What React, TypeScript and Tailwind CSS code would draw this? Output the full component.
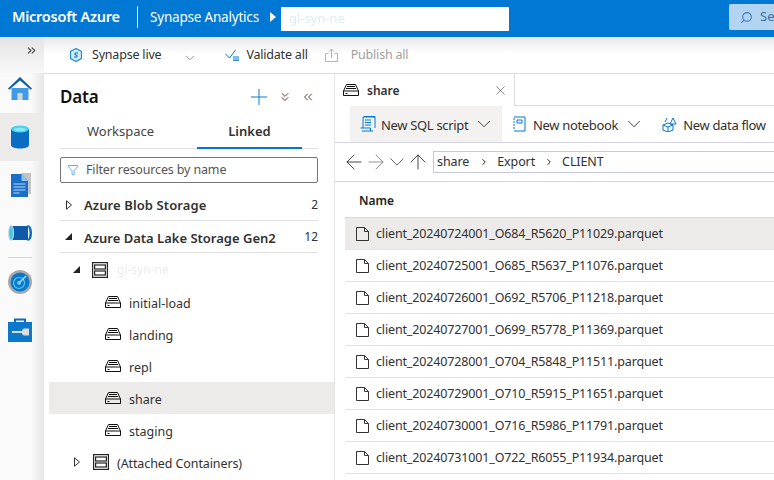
import React from 'react';
import { ChevronDown, ChevronRight, ChevronsDown, ChevronsLeft, ChevronsRight, ArrowLeft, ArrowRight, ArrowUp, Plus, X, Search, Filter } from 'lucide-react';

const FONT = 'font-["Noto_Sans","Open_Sans",sans-serif]';

const Drive = ({ className = '' }: { className?: string }) => (
  <svg viewBox="0 0 16 12" width="16" height="12" fill="none" stroke="#111" strokeWidth="1" className={`shrink-0 ${className}`}>
    <path d="M3.500 .5h9l3 6.500v4.500H.5V7z M.5 7h15 M4 2.500h8 M3 4.500h10 M2.500 9.500h2" />
  </svg>
);

const Account = () => (
  <svg viewBox="0 0 16 16" width="16" height="16" fill="none" stroke="#222" strokeWidth="1.200" className="shrink-0">
    <rect x=".6" y=".6" width="14.800" height="14.800" />
    <rect x="2.600" y="3" width="10.800" height="4" />
    <rect x="2.600" y="9" width="10.800" height="4" />
  </svg>
);

const FileIcon = () => (
  <svg viewBox="0 0 13 14" width="13" height="14" fill="none" stroke="#333" strokeWidth="1" className="shrink-0">
    <path d="M.5 .5h8l4 4v9H.5z M8.500 .5v4h4" />
  </svg>
);

const Caret = ({ open }: { open?: boolean }) =>
  open ? (
    <svg viewBox="0 0 7 7" width="7" height="7" className="shrink-0"><path d="M7 0v7H0z" fill="#222" /></svg>
  ) : (
    <svg viewBox="0 0 6 10" width="6" height="10" fill="none" stroke="#333" className="shrink-0"><path d="M.5 .8l5 4.200-5 4.200z" /></svg>
  );

const railIcons = [
  <svg key="home" viewBox="0 0 24 24" width="24" height="24">
    <path d="M3.500 11h17v12h-17z" fill="#3f9be8" />
    <path d="M9.500 16h5v7h-5z" fill="#d8d8d8" />
    <path d="M12 0L0 11.500l1.200 1.200L12 3.500l10.800 9.200 1.200-1.200z" fill="#0f5fa8" />
  </svg>,
  <svg key="data" viewBox="0 0 18 24" width="18" height="24">
    <path d="M0 4v16c0 2 4 3.500 9 3.500s9-1.500 9-3.500V4z" fill="#0b6cc4" />
    <ellipse cx="9" cy="4" rx="9" ry="3.500" fill="#45d3ee" />
    <ellipse cx="9" cy="4.500" rx="6" ry="1.800" fill="#8be6f5" />
  </svg>,
  <svg key="doc" viewBox="0 0 21 24" width="21" height="24">
    <path d="M11 0h10v21H11z" fill="#c4c4c4" />
    <path d="M1 1h10.500L18 8v16H1z" fill="#1a6fc9" />
    <path d="M11.500 1L18 8h-6.500z" fill="#8fc4ef" />
    <path d="M3.500 11h12M3.500 14h12M3.500 17h12M3.500 20h6" stroke="#b8d8f2" strokeWidth="1" />
  </svg>,
  <svg key="pipe" viewBox="0 0 24 16" width="24" height="16">
    <path d="M4 1h16v14H4z" fill="#0f5aa8" />
    <ellipse cx="3" cy="8" rx="2.500" ry="7.500" fill="#45c9ee" stroke="#dcdcdc" />
    <path d="M19 0c3.500 0 5 3 5 8s-1.500 8-5 8c1.500-2 2.500-4.500 2.500-8S20.500 2 19 0z" fill="#0f6cc0" />
  </svg>,
  <svg key="monitor" viewBox="0 0 24 24" width="24" height="24">
    <circle cx="12" cy="12" r="12" fill="#a8a8a8" />
    <circle cx="12" cy="12" r="9.500" fill="#0b78cc" />
    <circle cx="11" cy="13" r="5.500" fill="none" stroke="#5cc8f0" strokeWidth="1.200" />
    <circle cx="11" cy="13" r="2" fill="#5cc8f0" />
    <path d="M11 13l7-7" stroke="#a4e4f7" strokeWidth="1.500" />
  </svg>,
  <svg key="manage" viewBox="0 0 24 24" width="24" height="24">
    <path d="M7 6V1.500h10V6" fill="none" stroke="#0b6cc4" strokeWidth="2" />
    <path d="M0 4h24v20H0z" fill="#0b78cc" />
    <path d="M4 14h12M16 11.500a3 3 0 0 0 0 5h4V15h-3v-2h3v-1.500z" stroke="#dcdcdc" strokeWidth="2" fill="#dcdcdc" />
  </svg>,
];

const containers = ['initial-load', 'landing', 'repl', 'share', 'staging'];

const files = [
  'client_20240724001_O684_R5620_P11029.parquet',
  'client_20240725001_O685_R5637_P11076.parquet',
  'client_20240726001_O692_R5706_P11218.parquet',
  'client_20240727001_O699_R5778_P11369.parquet',
  'client_20240728001_O704_R5848_P11511.parquet',
  'client_20240729001_O710_R5915_P11651.parquet',
  'client_20240730001_O716_R5986_P11791.parquet',
  'client_20240731001_O722_R6055_P11934.parquet',
];

const App = () => {
  return (
    <div className={`${FONT} w-[774px] h-[480px] overflow-hidden flex flex-col bg-white text-[#323130]`}>
      {/* top bar */}
      <div className="h-[37px] shrink-0 bg-[#0078d4] flex items-center text-white">
        <span className="ml-[12px] mb-[3px] w-[109px] text-[14.500px] font-semibold tracking-[-0.25px] whitespace-nowrap">Microsoft Azure</span>
        <div className="ml-[16px] mb-[3px] w-px h-[22px] bg-white" />
        <span className="ml-[12px] mb-[3px] w-[108px] text-[13.500px] tracking-[-0.2px] whitespace-nowrap">Synapse Analytics</span>
        <svg viewBox="0 0 6 10" width="6" height="10" className="ml-[12px] mb-[3px]"><path d="M0 0l6 5-6 5z" fill="#fff" /></svg>
        <div className="ml-[5px] w-[228px] h-[24px] bg-white flex items-center pl-[8px] text-[13px] text-[#dcecf8] blur-[0.7px]">gl-syn-ne</div>
        <div className="ml-auto w-[45px] h-[26px] mb-[3px] bg-[#b3d4f0] rounded-l-[2px] flex items-center pl-[11px] gap-[7px] text-[13px] text-[#3a6ea5] overflow-hidden">
          <Search size={13} className="shrink-0 -scale-x-100" color="#3b78c4" />
          <span>Se</span>
        </div>
      </div>

      <div className="flex-1 flex min-h-0">
        {/* icon rail */}
        <div className="w-[44px] shrink-0 bg-gradient-to-r from-[#fafafa] from-[70%] to-[#e6e6e6] flex flex-col">
          <div className="h-[36px] flex justify-end pr-[6px] pt-[7px] bg-gradient-to-b from-[#e4e4e4] to-[#f8f8f8]">
            <ChevronsRight size={13} color="#444" />
          </div>
          <div className="h-[40px] pb-[8px] pr-[4px] flex items-center justify-center">{railIcons[0]}</div>
          <div className="h-[48px] pr-[4px] bg-[#edebe9] flex items-center justify-center">{railIcons[1]}</div>
          <div className="h-[48px] pr-[4px] flex items-center justify-center">{railIcons[2]}</div>
          <div className="h-[48px] pr-[4px] flex items-center justify-center">{railIcons[3]}</div>
          <div className="ml-[8px] mr-[12px] h-px bg-[#d4d4d4]" />
          <div className="h-[48px] pr-[4px] flex items-center justify-center">{railIcons[4]}</div>
          <div className="h-[48px] pr-[4px] flex items-center justify-center">{railIcons[5]}</div>
        </div>

        <div className="flex-1 min-w-0 flex flex-col">
          {/* command bar */}
          <div className="h-[37px] shrink-0 border-b border-[#dedede] bg-gradient-to-b from-[#e6e6e6] via-white via-[45%] to-white flex items-center text-[12.500px] tracking-[-0.2px]">
            <svg viewBox="0 0 12 14" width="12" height="14" className="ml-[26px]">
              <path d="M6 .5l5.500 3v7L6 13.500.5 10.500v-7z" fill="#cfeaf7" stroke="#1e8fd0" strokeWidth="1.200" />
              <path d="M8 5H5v2h2v2H4" fill="none" stroke="#1570b8" />
            </svg>
            <span className="ml-[10px] whitespace-nowrap">Synapse live</span>
            <ChevronDown size={14} strokeWidth={1.200} color="#666" className="ml-[22px] mt-[6px]" />
            <svg viewBox="0 0 14 12" width="14" height="12" fill="none" className="ml-[28px]">
              <path d="M.5 5l4 4 6-8" stroke="#0078d4" />
              <path d="M8 8h6M8 10h6M8 11.700h6" stroke="#0078d4" />
            </svg>
            <span className="ml-[7px] whitespace-nowrap">Validate all</span>
            <svg viewBox="0 0 14 14" width="14" height="14" fill="none" stroke="#b5b5b5" className="ml-[17px]">
              <path d="M3.500 5.500H.5v8h12v-8h-3M6.500 10V1M4 3.500L6.500 1 9 3.500" />
            </svg>
            <span className="ml-[12px] text-[#a19f9d] whitespace-nowrap">Publish all</span>
          </div>

          <div className="flex-1 min-h-0 flex">
            {/* data panel */}
            <div className="w-[291px] shrink-0 border-r border-[#e5e5e5] flex flex-col">
              <div className="h-[46px] shrink-0 flex items-center pl-[16px]">
                <span className="text-[17px] font-semibold text-[#111] tracking-[-0.2px]">Data</span>
                <Plus size={26} strokeWidth={0.900} color="#0078d4" className="ml-[148px]" />
                <ChevronsDown size={14} strokeWidth={1.600} color="#5c2c16" className="ml-[6px]" />
                <ChevronsLeft size={14} strokeWidth={1.600} color="#5c2c16" className="ml-[9px]" />
              </div>
              <div className="mx-[16px] w-[258px] h-[29px] shrink-0 flex border-b border-[#e1e1e1] text-[13px]">
                <div className="w-[137px] pb-[4px] flex items-center justify-center text-[#444] -translate-x-[8px]">Workspace</div>
                <div className="w-[105px] pb-[4px] flex items-center justify-center font-semibold border-b-2 border-[#0078d4] h-[29px] text-[#333]">Linked</div>
              </div>
              <div className="mx-[16px] mt-[8px] w-[258px] h-[26px] shrink-0 border border-[#777] rounded-[2px] flex items-center pl-[6px] gap-[7px] text-[12.500px] text-[#555] tracking-[-0.15px]">
                <Filter size={12} color="#0078d4" strokeWidth={1.200} />
                <span>Filter resources by name</span>
              </div>
              <div className="mt-[6px] ml-[5px] flex flex-col">
                <div className="ml-[11px] mr-[16px] h-[32px] flex items-center border-b border-[#e1e1e1] text-[13px] font-semibold">
                  <div className="w-[24px] pl-[6px]"><Caret /></div>
                  <span className="pt-[2px] tracking-[0.1px]">Azure Blob Storage</span>
                  <span className="ml-auto text-[12px] font-normal">2</span>
                </div>
                <div className="ml-[11px] mr-[16px] h-[32px] flex items-center border-b border-[#e1e1e1] text-[13px] font-semibold">
                  <div className="w-[24px] pl-[5px]"><Caret open /></div>
                  <span className="pt-[4px] whitespace-nowrap">Azure Data Lake Storage Gen2</span>
                  <span className="ml-auto text-[12px] font-normal">12</span>
                </div>
                <div className="h-[33px] flex items-center pl-[24px]">
                  <Caret open />
                  <div className="w-[12px]" />
                  <Account />
                  <span className="ml-[9px] text-[12px] text-[#ececec] blur-[0.5px] whitespace-nowrap">gl-syn-ne</span>
                </div>
                {containers.map((name) => (
                  <div key={name} className={`h-[32px] pl-[56px] flex items-center gap-[8px] text-[12.500px] ${name === 'share' ? 'bg-[#edebe9]' : ''}`}>
                    <Drive />
                    <span className="pt-[4px]">{name}</span>
                  </div>
                ))}
                <div className="h-[32px] flex items-center pl-[25px] text-[12.500px] tracking-[-0.1px]">
                  <Caret />
                  <div className="w-[13px]" />
                  <Account />
                  <span className="ml-[8px] pt-[4px] whitespace-nowrap">(Attached Containers)</span>
                </div>
              </div>
            </div>

            {/* share tab */}
            <div className="flex-1 min-w-0 flex flex-col">
              <div className="h-[32px] shrink-0 flex border-b border-[#dedede]">
                <div className="w-[180px] h-[32px] bg-white border-r border-[#dedede] flex items-center pl-[8px] text-[12px] font-semibold">
                  <Drive />
                  <span className="ml-[8px] pt-[2px]">share</span>
                  <X size={15} strokeWidth={1} color="#444" className="ml-auto mr-[6px]" />
                </div>
              </div>
              <div className="h-[37px] shrink-0 flex items-center border-b border-[#d6d6e4] text-[13px] tracking-[-0.33px]">
                <div className="ml-[15px] w-[152px] h-[36px] bg-[#f3f2f1] flex items-center pl-[10px]">
                  <svg viewBox="0 0 16 16" width="16" height="16" fill="none" stroke="#0078d4" className="shrink-0">
                    <path d="M3 12V1h11v1M4 .5h11V12M2 15h11M.5 12h10v3M5 4h6M5 6.500h6M5 9h6" />
                  </svg>
                  <span className="ml-[5px] pt-[3px] whitespace-nowrap">New SQL script</span>
                  <ChevronDown size={22} className="ml-[5px] shrink-0" strokeWidth={1} />
                </div>
                <svg viewBox="0 0 16 16" width="16" height="16" fill="none" stroke="#0078d4" className="ml-[10px] shrink-0">
                  <path d="M2 1h11v14H2M1 3h2M1 6h2M1 9h2M1 12h2M5 4h5v3H5z" />
                </svg>
                <span className="ml-[5px] pt-[3px] whitespace-nowrap">New notebook</span>
                <ChevronDown size={22} className="ml-[5px] shrink-0" strokeWidth={1} />
                <svg viewBox="0 0 16 16" width="16" height="16" fill="none" stroke="#0078d4" className="ml-[17px] shrink-0">
                  <path d="M1 9l5-2 5 2v5l-5 2-5-2zM1 9l5 2 5-2M6 11v5M11 2l3 6h-6zM3 6l2-4" />
                </svg>
                <span className="ml-[5px] pt-[3px] whitespace-nowrap">New data flow</span>
              </div>
              <div className="h-[39px] shrink-0 flex items-center border-b border-[#d6d6e4] pl-[7px]">
                <ArrowLeft size={24} strokeWidth={0.900} color="#333" className="shrink-0" />
                <ArrowRight size={24} strokeWidth={0.900} color="#888" className="-ml-[2px] shrink-0" />
                <ChevronDown size={24} strokeWidth={0.900} color="#555" className="-ml-[3px] shrink-0" />
                <ArrowUp size={24} strokeWidth={0.900} color="#333" className="-ml-[3px] shrink-0" />
                <div className="ml-[3px] flex-1 h-[22px] border border-r-0 border-[#c8c8dc] flex items-center pl-[3px] text-[12.500px] tracking-[-0.1px]">
                  <span className="pt-[1px]">share</span>
                  <ChevronRight size={10} strokeWidth={2.400} color="#222" className="ml-[10px]" />
                  <span className="ml-[8px] pt-[1px]">Export</span>
                  <ChevronRight size={10} strokeWidth={2.400} color="#222" className="ml-[9px]" />
                  <span className="ml-[8px] pt-[1px]">CLIENT</span>
                </div>
              </div>
              <div className="ml-[10px] h-[36px] shrink-0 flex items-center border-b border-[#d6d6e4] pl-[14px] text-[12px] font-semibold text-[#222]">
                <span className="pt-[2px]">Name</span>
              </div>
              {files.map((file, i) => (
                <div key={file} className={`ml-[10px] h-[32px] shrink-0 flex items-center border-b border-[#e4e4e4] pl-[11px] gap-[7px] text-[12.500px] tracking-[-0.15px] whitespace-nowrap ${i === 0 ? 'bg-[#edebe9]' : ''}`}>
                  <FileIcon />
                  <span className="pt-[2px]">{file}</span>
                </div>
              ))}
            </div>
          </div>
        </div>
      </div>
    </div>
  );
};

export default App;
